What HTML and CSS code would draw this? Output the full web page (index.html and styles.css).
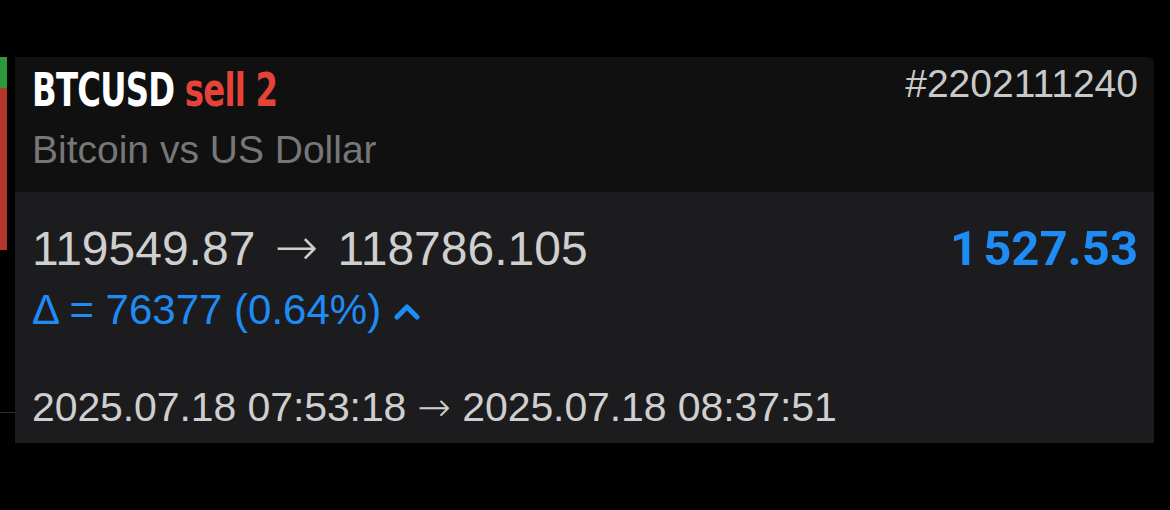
FILE: index.html
```html
<!DOCTYPE html>
<html>

<head>
  <meta charset="utf-8">
  <title>BTCUSD sell 2</title>
  <link rel="stylesheet" href="styles.css">
</head>
<body>
  <div class="row">

    <div class="side">
      <div class="side_green"></div>
      <div class="side_red"></div>
      <div class="side_line"></div>
    </div>

    <div class="deal">
      <div class="deal_head">
        <div class="head_top">
          <div class="symbol">BTCUSD <span class="sell">sell 2</span></div>
          <div class="ticket">#2202111240</div>
        </div>
        <div class="desc">Bitcoin vs US Dollar</div>
      </div>

      <div class="deal_body">
        <div class="body_top">
          <div class="prices">119549.87 <span class="arrow">&rarr;</span> 118786.105</div>
          <div class="profit">1&#8202;527.53</div>
        </div>
        <div class="delta">&Delta; = 76377 (0.64%)
          <svg class="caret" width="26" height="18" viewBox="0 0 26 18">
            <path d="M3 15 L13 5 L23 15" fill="none" stroke="#1f8cf5" stroke-width="5" stroke-linecap="round" stroke-linejoin="round"/>
          </svg>
        </div>
        <div class="times">2025.07.18 07:53:18 <span class="arrow_small">&rarr;</span> 2025.07.18 08:37:51</div>
      </div>
    </div>

  </div>
</body>

</html>
```

FILE: styles.css
```css
body {
  margin: 0;
  padding-top: 57px;
  background-color: #000;
  font-family: "Liberation Sans", Arial, sans-serif;
}

.row {
  display: flex;
}

.side {
  width: 15px;
  display: flex;
  flex-direction: column;
}

.side_green {
  width: 7px;
  height: 31px;
  background-color: #2f9a3c;
}

.side_red {
  width: 7px;
  height: 162px;
  background-color: #b5372b;
}

.side_line {
  margin-top: 162px;
  height: 1px;
  background-color: #2e2e2e;
}

.deal {
  width: 1139px;
  border-top-right-radius: 6px;
  overflow: hidden;
}

.deal_head {
  height: 135px;
  background-color: #101010;
  padding: 0 16px 0 17px;
  box-sizing: border-box;
}

.head_top {
  display: flex;
  justify-content: space-between;
  height: 68px;
}

/* no narrow bold font installed, so squeeze the condensed one */
.symbol {
  font-family: "DejaVu Sans Condensed", sans-serif;
  font-weight: bold;
  font-size: 47px;
  letter-spacing: -1px;
  color: #fff;
  padding-top: 6px;
  line-height: 54px;
  transform: scaleX(0.765);
  transform-origin: left center;
  white-space: nowrap;
}

.sell {
  color: #e5433a;
}

.ticket {
  font-size: 39px;
  color: #c9c9c9;
  padding-top: 5px;
  line-height: 44px;
}

.desc {
  font-size: 39px;
  color: #777;
  line-height: 44px;
  padding-top: 3px;
}

.deal_body {
  height: 251px;
  background-color: #1c1c1e;
  padding: 0 16px 0 17px;
  box-sizing: border-box;
}

.body_top {
  display: flex;
  justify-content: space-between;
  align-items: flex-start;
  padding-top: 28px;
}

.prices {
  font-size: 48px;
  color: #cfcfcf;
  line-height: 54px;
}

.arrow {
  font-family: "DejaVu Sans", sans-serif;
  font-weight: 200;
  font-size: 52px;
  margin: 0 6px;
}

.profit {
  font-family: Roboto, sans-serif;
  font-weight: bold;
  font-size: 49px;
  color: #1f8cf5;
  line-height: 54px;
  padding-top: 2px;
}

.delta {
  font-size: 42px;
  color: #1f8cf5;
  line-height: 48px;
  margin-top: 10px;
  display: flex;
  align-items: center;
  gap: 13px;
}

.caret {
  margin-top: 2px;
}

.times {
  font-size: 41px;
  color: #cfcfcf;
  line-height: 48px;
  margin-top: 49px;
  letter-spacing: -0.1px;
}

.arrow_small {
  font-family: "DejaVu Sans", sans-serif;
  font-weight: 200;
  font-size: 40px;
}
```
